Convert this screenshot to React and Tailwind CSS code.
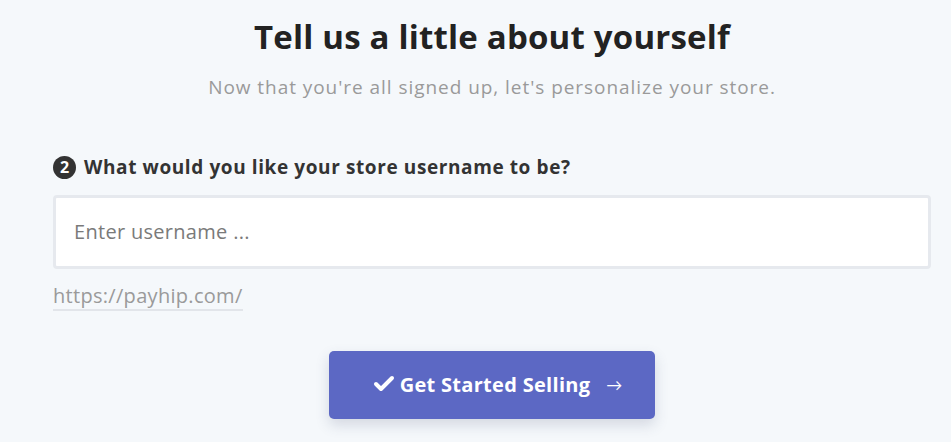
import { Check } from 'lucide-react';

export default function App() {
  return (
    <div
      className="w-full h-[442px] bg-[#f5f8fb] overflow-hidden"
      style={{ fontFamily: '"Open Sans", Lato, sans-serif' }}
    >
      <div className="ml-[53px] w-[878px]">
        <div className="flex flex-col items-center pt-[14px]">
          <h1 className="text-[33px] leading-[46px] font-bold text-[#222] tracking-[0.2px]">
            Tell us a little about yourself
          </h1>
          <p className="mt-[14px] text-[19px] leading-[26px] text-[#9a9a9a] tracking-[0.95px]">
            Now that you're all signed up, let's personalize your store.
          </p>
        </div>

        <div className="mt-[54px]">
          <div className="flex items-center gap-[8px]">
            <span className="w-[23px] h-[23px] rounded-full bg-[#333] text-white text-[16px] font-bold flex items-center justify-center leading-none">
              2
            </span>
            <span className="text-[19px] leading-[26px] font-bold text-[#333] tracking-[0.6px]">
              What would you like your store username to be?
            </span>
          </div>

          <div className="mt-[15px] h-[74px] bg-white border-[3px] border-[#e6e9ee] rounded-[4px] flex items-center px-[18px]">
            <input
              type="text"
              placeholder="Enter username ..."
              className="w-full bg-transparent outline-none text-[20px] text-[#333] placeholder-[#7a7a7a] tracking-[0.3px]"
            />
          </div>

          <div className="mt-[14px] flex">
            <span className="text-[20px] leading-[26px] text-[#9a9a9a] border-b-2 border-[#e2e5ea] tracking-[0.3px]">
              https://payhip.com/
            </span>
          </div>

          <div className="flex justify-center mt-[40px]">
            <button className="w-[326px] h-[68px] rounded-[5px] bg-[#5c68c4] text-white flex items-center justify-center pl-[10px] shadow-[0_6px_14px_rgba(60,70,110,0.18)]">
              <Check size={24} strokeWidth={4} className="mr-[4px] -mt-[2px]" />
              <span className="text-[20px] font-bold tracking-[0.3px]">Get Started Selling</span>
              <span className="ml-[16px] text-[16px]">→</span>
            </button>
          </div>
        </div>
      </div>
    </div>
  );
}
